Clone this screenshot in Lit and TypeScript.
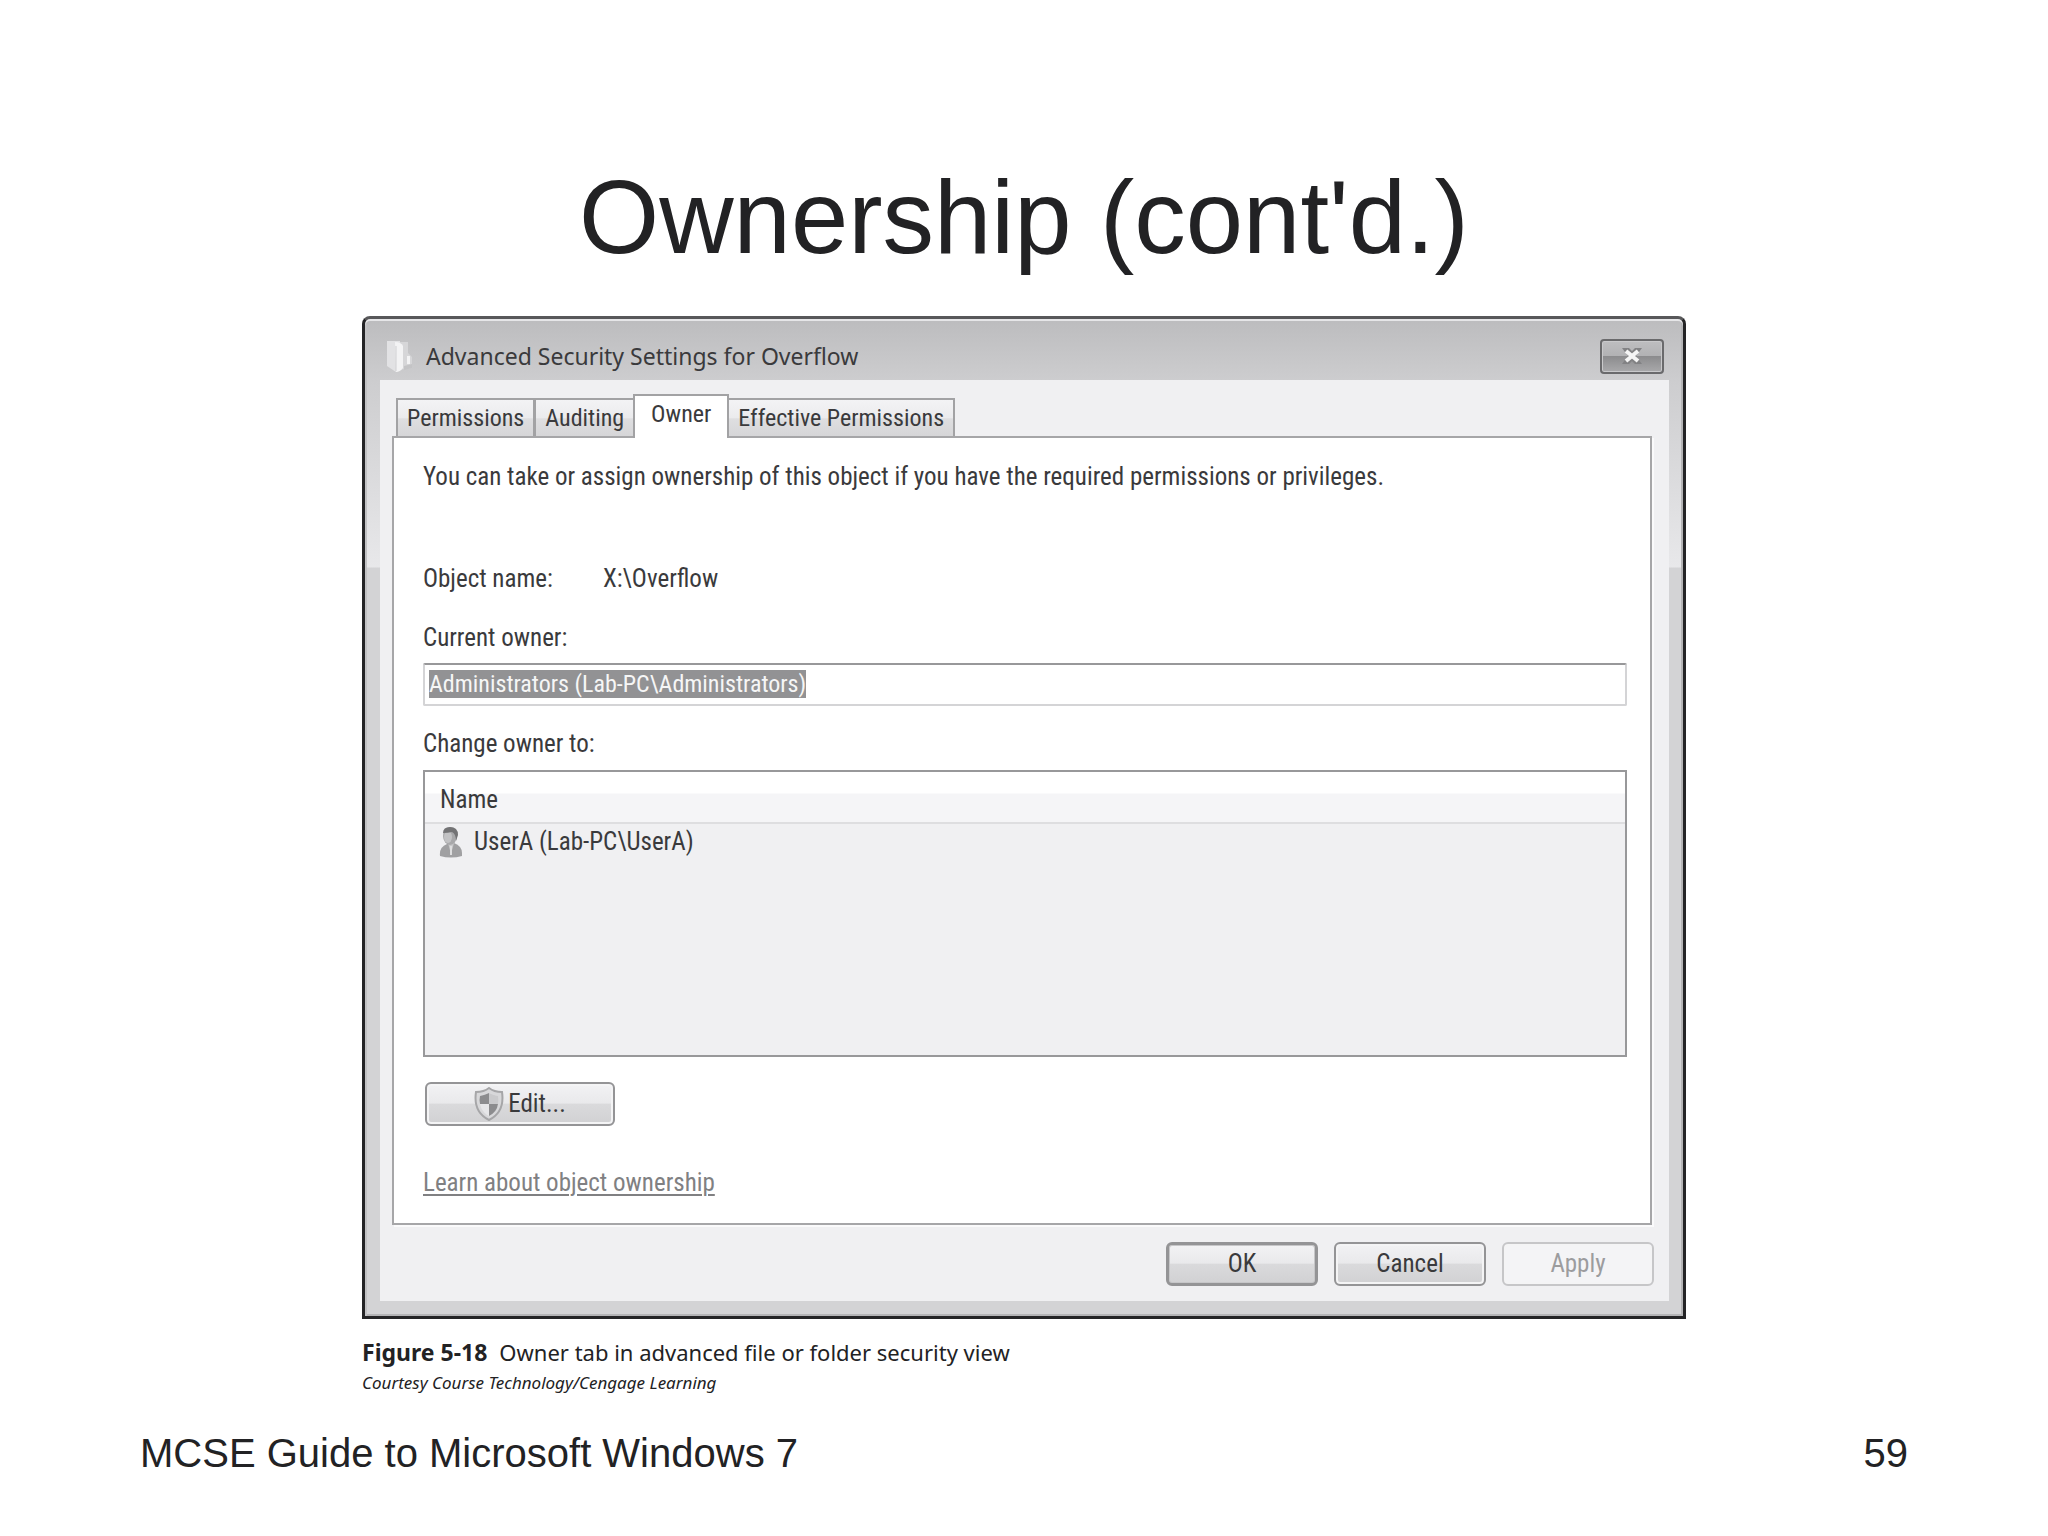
import { LitElement, html, css, svg } from "lit";
import { customElement, state, query } from "lit/decorators.js";

const folderIcon = svg`
  <svg class="folder" viewBox="0 0 28 34" aria-hidden="true">
    <path d="M11 3 L22 3 L22 14 L26 18 L26 29 L12 31 Z" fill="#d6d6d8" />
    <path d="M1 2 L14 2 L14 31 L10 33 L1 27 Z" fill="#e2e2e4" />
    <path d="M9 3 Q15 3 17 7 L17 29 Q14 33 10 33 Z" fill="#f3f3f4" />
    <path d="M10 7 L10 32" stroke="#cfcfd1" stroke-width="1" />
    <rect x="21" y="17" width="3" height="8" fill="#f3f3f4" />
    <path d="M18 27 L26 25 L26 29 L18 31 Z" fill="#c4c4c6" />
  </svg>`;

const closeIcon = svg`
  <svg class="cross" viewBox="0 0 24 20" aria-hidden="true">
    <path d="M2 2 H9 L12 5 L15 2 H22 L16 10 L22 18 H15 L12 15 L9 18 H2 L8 10 Z" fill="#828284" />
    <path d="M6 5 L18 15 M18 5 L6 15" stroke="#f5f5f5" stroke-width="4" />
  </svg>`;

const userIcon = svg`
  <svg class="user" viewBox="0 0 24 32" aria-hidden="true">
    <path d="M1 30 Q0 21 8 18 L15 17 Q23 20 23 27 L23 30 Q12 33 1 30 Z" fill="#a0a0a2" />
    <path d="M9 17 L12 28 L15 17 Z" fill="#c8c8ca" />
    <path d="M11 20 L13 20 L13 29 L11 29 Z" fill="#dededf" />
    <ellipse cx="11" cy="10" rx="7" ry="9" fill="#a8a8aa" />
    <ellipse cx="9" cy="11" rx="4" ry="6" fill="#c2c2c4" />
    <path d="M4 7 Q4 1 11 1 Q19 1 19 9 L17 15 Q17 8 13 6 Q9 7 4 7 Z" fill="#737375" />
  </svg>`;

const shieldIcon = svg`
  <svg class="shield" viewBox="0 0 30 34" aria-hidden="true">
    <path d="M15 1 Q20 5 28 5 Q31 25 15 33 Q-1 25 2 5 Q10 5 15 1 Z"
      fill="#d8d8da" stroke="#a6a6a8" stroke-width="2" />
    <path d="M15 6 Q19 8 24 9 Q26 23 15 29 Q4 23 6 9 Q11 8 15 6 Z" fill="#e6e6e8" />
    <path d="M15 6 L15 17 L6 17 Q5 13 6 9 Q11 8 15 6 Z" fill="#8c8c8e" />
    <path d="M15 17 L24 17 Q23 25 15 29 Z" fill="#8c8c8e" />
    <path d="M15 6 L15 17 L24 17 Q25 13 24 9 Q19 8 15 6 Z" fill="#cacacc" />
  </svg>`;

@customElement("security-dialog")
export class SecurityDialog extends LitElement {
  @state() private tab = "Owner";
  @query("#owner") private owner!: HTMLInputElement;

  private tabs = ["Permissions", "Auditing", "Owner", "Effective Permissions"];
  private candidates = ["UserA (Lab-PC\\UserA)"];

  static styles = css`
    :host {
      display: block;
      color: #3a3a3c;
      font: 25px/30px "Roboto Condensed", "Liberation Sans Narrow", "Liberation Sans", sans-serif;
    }
    * { box-sizing: border-box; }
    button, input { font: inherit; color: inherit; }
    .window {
      border: 3px solid #242426;
      border-top-color: #58585a;
      border-radius: 8px 8px 0 0;
      padding: 0 14px 15px 15px;
      background:
        linear-gradient(#bcbcbe, #cdcdcf 62px, transparent 62px),
        linear-gradient(#cdcdcf 62px, #e8e8ea 248px, #d3d3d5 249px);
      box-shadow: inset 0 2px #e6e6e8, inset 2px 0 #c2c2c4, inset -2px -2px #b4b4b6;
    }
    .titlebar {
      display: flex;
      align-items: center;
      height: 61px;
      padding: 13px 5px 0 6px;
      gap: 12px;
    }
    .folder { width: 28px; height: 34px; }
    .title {
      flex: 1;
      margin: 0;
      font: 23px/32px "Noto Sans", "Open Sans", sans-serif;
    }
    .close {
      display: flex;
      align-items: center;
      justify-content: center;
      width: 64px;
      height: 35px;
      padding: 0;
      border: 2px solid #6a6a6c;
      border-radius: 4px;
      background: linear-gradient(#bebec0, #b2b2b4 48%, #8c8c8e 50%, #a9a9ab);
      box-shadow: inset 0 0 0 1px #c9c9cb;
    }
    .cross { width: 24px; height: 20px; }
    .client {
      padding: 14px 15px 15px 12px;
      background: #f0f0f2;
    }
    .tabs {
      display: flex;
      align-items: flex-end;
      padding-left: 4px;
      font-size: 24px;
    }
    .tab {
      height: 38px;
      padding: 0 9px;
      border: 2px solid #a2a2a4;
      border-bottom: 0;
      margin-right: -1px;
      background: linear-gradient(#f3f3f5, #ebebed 50%, #dedee0 52%, #d6d6d8);
    }
    .tab.active {
      position: relative;
      height: 44px;
      margin: 0 -2px -2px -1px;
      padding: 0 16px 6px;
      background: #fff;
    }
    .panel {
      display: flex;
      flex-direction: column;
      margin-right: 2px;
      padding: 24px 23px 25px 29px;
      border: 2px solid #a6a6a8;
      background: #fff;
      box-shadow: 2px 2px #fafafb;
    }
    .intro { margin: 0 0 72px; }
    .object {
      display: grid;
      grid-template-columns: 180px 1fr;
      margin: 0 0 29px;
    }
    .object dt, .object dd { margin: 0; }
    .field {
      height: 43px;
      margin: 10px 0 23px;
      padding: 0 4px 2px;
      border: 2px solid #d4d4d6;
      border-top-color: #98989a;
      border-radius: 2px;
      outline: 0;
      background: #fff;
      font-size: 24px;
    }
    .field::selection { background: #929294; color: #f6f6f6; }
    .list {
      height: 287px;
      margin: 11px 0 25px;
      border: 2px solid #98989a;
      background: #f0f0f2;
    }
    table { width: 100%; border-collapse: collapse; }
    th {
      height: 51px;
      padding: 6px 0 0 15px;
      text-align: left;
      font-weight: normal;
      border-bottom: 2px solid #dedee0;
      background: linear-gradient(#fff 21px, #f5f5f7 22px);
    }
    td { padding: 2px 0 0 14px; }
    .person { display: flex; align-items: center; gap: 11px; }
    .user { width: 24px; height: 32px; }
    .push {
      display: flex;
      align-items: center;
      justify-content: center;
      width: 152px;
      height: 44px;
      padding: 0;
      border: 2px solid #949496;
      border-radius: 6px;
      background: linear-gradient(#f2f2f4, #e9e9eb 48%, #dadadc 50%, #d1d1d3);
      box-shadow: inset 0 0 0 2px #f4f4f5;
    }
    .push.default { border-width: 3px; box-shadow: inset 0 0 0 1px #c6c6c8; }
    .push:disabled {
      border-color: #c6c6c8;
      background: #f4f4f6;
      color: #9c9c9e;
    }
    .push.edit { width: 190px; margin-left: 2px; gap: 4px; }
    .shield { width: 30px; height: 34px; }
    .learn {
      align-self: flex-start;
      margin-top: 42px;
      color: #808082;
      text-underline-offset: 3px;
      text-decoration-thickness: 2px;
    }
    .actions {
      display: flex;
      justify-content: flex-end;
      gap: 16px;
      margin-top: 17px;
    }
  `;

  firstUpdated() {
    this.owner.focus();
    this.owner.select();
  }

  render() {
    return html`
      <section class="window" aria-labelledby="title">
        <header class="titlebar">
          ${folderIcon}
          <h2 class="title" id="title">Advanced Security Settings for Overflow</h2>
          <button class="close" aria-label="Close">${closeIcon}</button>
        </header>
        <div class="client">
          <div class="tabs" role="tablist">
            ${this.tabs.map((name) => html`
              <button class="tab ${name === this.tab ? "active" : ""}" role="tab"
                aria-selected=${name === this.tab} @click=${() => (this.tab = name)}>${name}</button>`)}
          </div>
          <div class="panel" role="tabpanel">
            <p class="intro">You can take or assign ownership of this object if you have the required permissions or privileges.</p>
            <dl class="object"><dt>Object name:</dt><dd>X:\\Overflow</dd></dl>
            <label for="owner">Current owner:</label>
            <input class="field" id="owner" readonly value="Administrators (Lab-PC\\Administrators)" />
            <span id="change">Change owner to:</span>
            <div class="list">
              <table aria-labelledby="change">
                <thead><tr><th scope="col">Name</th></tr></thead>
                <tbody>
                  ${this.candidates.map((c) => html`<tr><td><div class="person">${userIcon}<span>${c}</span></div></td></tr>`)}
                </tbody>
              </table>
            </div>
            <button class="push edit">${shieldIcon}<span>Edit...</span></button>
            <a class="learn" href="#ownership">Learn about object ownership</a>
          </div>
          <div class="actions">
            <button class="push default">OK</button>
            <button class="push">Cancel</button>
            <button class="push" disabled>Apply</button>
          </div>
        </div>
      </section>
    `;
  }
}

@customElement("app-root")
export class AppRoot extends LitElement {
  static styles = css`
    :host { display: block; }
    * { box-sizing: border-box; }
    .slide {
      display: flex;
      flex-direction: column;
      min-height: 100vh;
      padding: 158px 0 59px;
      background: #fff;
      color: #222224;
      font-family: "Liberation Sans", Arial, sans-serif;
    }
    .heading {
      margin: 0;
      text-align: center;
      font-size: 103px;
      line-height: 120px;
      font-weight: normal;
    }
    .body {
      display: grid;
      grid-template-columns: 362fr 1324fr 362fr;
      margin-top: 38px;
    }
    .figure { grid-column: 2; margin: 0; }
    .caption {
      margin-top: 18px;
      font: 22px/30px "Noto Sans", "Open Sans", sans-serif;
    }
    .number { margin-right: 12px; font-size: 23px; }
    .credit { display: block; font-size: 17px; line-height: 32px; font-style: italic; }
    .footer {
      display: flex;
      justify-content: space-between;
      margin-top: auto;
      padding: 0 140px;
      font-size: 40px;
      line-height: 48px;
    }
  `;

  render() {
    return html`
      <main class="slide">
        <h1 class="heading">Ownership (cont'd.)</h1>
        <div class="body">
          <figure class="figure">
            <security-dialog></security-dialog>
            <figcaption class="caption">
              <b class="number">Figure 5-18</b>Owner tab in advanced file or folder security view
              <span class="credit">Courtesy Course Technology/Cengage Learning</span>
            </figcaption>
          </figure>
        </div>
        <footer class="footer"><span>MCSE Guide to Microsoft Windows 7</span><span>59</span></footer>
      </main>
    `;
  }
}
